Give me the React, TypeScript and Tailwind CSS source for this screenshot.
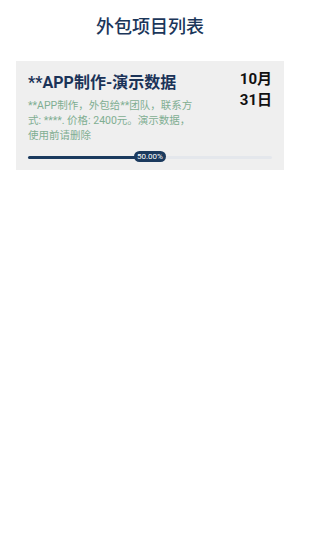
const FONT = '"Roboto", "Noto Sans CJK SC", sans-serif'

const project = {
  title: '**APP制作-演示数据',
  desc: '**APP制作，外包给**团队，联系方式: ****. 价格: 2400元。演示数据，使用前请删除',
  month: '10月',
  day: '31日',
  progress: 50,
}

function ProgressBar({ value }: { value: number }) {
  return (
    <div className="relative flex h-[12px] items-center">
      <div className="h-[3px] w-full rounded-full bg-[#e4e7ec]">
        <div className="h-full rounded-full bg-[#1b3a5e]" style={{ width: `${value}%` }} />
      </div>
      <span
        className="absolute top-0 flex h-[11px] w-[32px] -translate-x-1/2 items-center justify-center rounded-full bg-[#1b3a5e] text-[8px] leading-none text-white"
        style={{ left: `${value}%` }}
      >
        {value.toFixed(2)}%
      </span>
    </div>
  )
}

export default function App() {
  return (
    <div className="min-h-[533px] w-[300px] bg-white" style={{ fontFamily: FONT }}>
      <h1 className="pt-[15px] text-center text-[18px] font-medium leading-[24px] text-[#1b365a]">外包项目列表</h1>

      <div className="mx-4 mt-[22px] bg-[#efefef] px-3 pb-[7px] pt-[8px]">
        <div className="flex justify-between">
          <div className="flex-1">
            <div className="mt-[3px] text-[16px] font-bold leading-[22px] text-[#1b3358]">{project.title}</div>
            <p className="mt-[4px] w-[166px] text-[10.5px] leading-[15px] text-[#7fae92]">{project.desc}</p>
          </div>
          <div className="text-right text-[15px] font-bold leading-[21px] text-[#111]">
            <div>{project.month}</div>
            <div>{project.day}</div>
          </div>
        </div>
        <div className="mt-[8px]">
          <ProgressBar value={project.progress} />
        </div>
      </div>
    </div>
  )
}
